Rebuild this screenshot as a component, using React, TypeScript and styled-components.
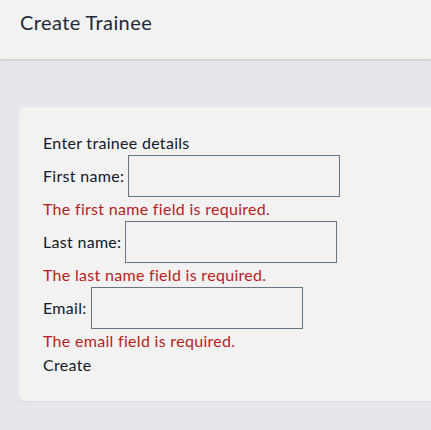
import React from 'react';
import styled, { createGlobalStyle } from 'styled-components';

const GlobalStyle = createGlobalStyle`
    html, body {
        margin: 0;
        padding: 0;
        background: #e5e7eb;
    }
    body {
        font-family: Lato, "Noto Sans", sans-serif;
        color: #111827;
        letter-spacing: 0.3px;
    }
`;

interface Field {
    name: string;
    label: string;
    type: string;
}

const fields: Field[] = [
    { name: 'first name', label: 'First name:', type: 'text' },
    { name: 'last name', label: 'Last name:', type: 'text' },
    { name: 'email', label: 'Email:', type: 'email' },
];

const App: React.FC = () => {
    return (
        <>
            <GlobalStyle />
            <Page>
                <Header>
                    <Title>Create Trainee</Title>
                </Header>
                <Main>
                    <Card>
                        <Line>Enter trainee details</Line>
                        {fields.map(field => (
                            <React.Fragment key={field.name}>
                                <FieldRow>
                                    <Label htmlFor={field.name}>{field.label}</Label>
                                    <Input id={field.name} type={field.type} />
                                </FieldRow>
                                <ErrorText>The {field.name} field is required.</ErrorText>
                            </React.Fragment>
                        ))}
                        <CreateButton type="button">Create</CreateButton>
                    </Card>
                </Main>
            </Page>
        </>
    );
};

const Page = styled('div')({
    minHeight: '430px',
    display: 'flex',
    flexDirection: 'column',
});

const Header = styled('header')({
    height: '59px',
    boxSizing: 'border-box',
    padding: '8px 20px',
    background: '#f2f2f2',
    boxShadow: '0 1px 3px rgba(0, 0, 0, 0.14)',
    position: 'relative',
    zIndex: 1,
});

const Title = styled('h1')({
    margin: 0,
    fontSize: '20px',
    fontWeight: 400,
    lineHeight: '28px',
    letterSpacing: '0.4px',
    color: '#1f2937',
});

const Main = styled('main')({
    display: 'flex',
    padding: '48px 0 0 19px',
});

const Card = styled('div')({
    flex: 1,
    boxSizing: 'border-box',
    padding: '24px',
    background: '#f2f2f2',
    borderRadius: '6px 0 0 6px',
    boxShadow: '0 1px 2px rgba(0, 0, 0, 0.06)',
    fontSize: '16px',
    lineHeight: '24px',
});

const Line = styled('div')({
    height: '24px',
});

const FieldRow = styled('div')({
    display: 'flex',
    alignItems: 'center',
    gap: '4px',
});

const Label = styled('label')({
    lineHeight: '24px',
});

const Input = styled('input')({
    width: '212px',
    height: '42px',
    boxSizing: 'border-box',
    margin: 0,
    border: '1px solid #6b7280',
    background: 'transparent',
    fontSize: '16px',
    padding: '8px 12px',
    outline: 'none',
});

const ErrorText = styled('div')({
    color: '#b91c1c',
    lineHeight: '24px',
});

const CreateButton = styled('button')({
    display: 'block',
    padding: 0,
    border: 'none',
    background: 'none',
    font: 'inherit',
    letterSpacing: 'inherit',
    color: '#111827',
    lineHeight: '24px',
    cursor: 'pointer',
});

export default App;
